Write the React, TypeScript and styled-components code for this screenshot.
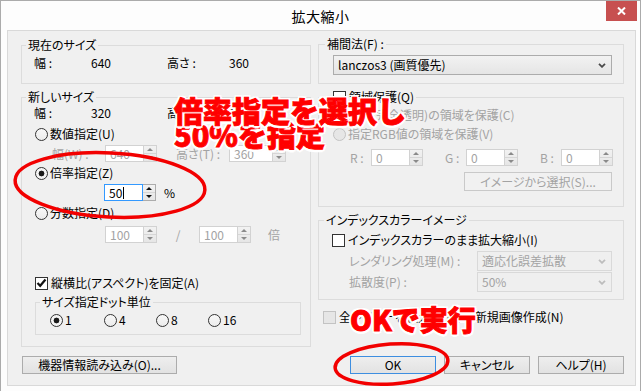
import * as React from 'react'
import styled, { createGlobalStyle } from 'styled-components'

const GlobalStyle = createGlobalStyle`
  html, body {
    margin: 0;
    padding: 0;
    background: #ffffff;
  }
  body {
    font-family: "Noto Sans CJK JP", "Noto Sans", sans-serif;
    font-size: 12px;
    line-height: 16px;
    color: #000;
    font-feature-settings: "palt";
  }
`

const DIM = '#a3a3a3'

const Stage = styled.div`
  position: relative;
  width: 643px;
  height: 391px;
  overflow: hidden;
  background: #ffffff;
`

const Frame = styled.div`
  width: 641px;
  height: 393px;
  box-sizing: border-box;
  border: 1px solid #ababab;
  background: #fdfdfd;
`

const TitleBar = styled.div`
  height: 29px;
  display: grid;
  grid-template-columns: 1fr auto 1fr;
  align-items: start;
`

const Title = styled.div`
  grid-column: 2;
  font-size: 14px;
  line-height: 30px;
  letter-spacing: 0.5px;
`

const CloseButton = styled.div`
  grid-column: 3;
  justify-self: end;
  width: 31px;
  height: 20px;
  margin-right: 3px;
  background: #c75050;
  display: flex;
  align-items: center;
  justify-content: center;
`

const Panel = styled.div`
  margin-left: 6px;
  width: 629px;
  height: 356px;
  box-sizing: border-box;
  border: 1px solid #d9d9d9;
  background: #f0f0f0;
  padding: 0 11px 0 13px;
  display: flex;
  gap: 7px;
`

const Column = styled.div<{ $w: number }>`
  width: ${p => p.$w}px;
  display: flex;
  flex-direction: column;
  align-items: stretch;
`

const Group = styled.fieldset<{ $mt: number; $ml?: number; $w?: number }>`
  margin: ${p => p.$mt}px 0 0 ${p => p.$ml ?? 0}px;
  padding: 0;
  border: 1px solid #dcdcdc;
  min-width: 0;
  ${p => (p.$w ? `width: ${p.$w}px; box-sizing: border-box;` : '')}
`

const Legend = styled.legend<{ $ml: number }>`
  margin-left: ${p => p.$ml}px;
  padding: 0 2px;
  line-height: 16px;
  display: flex;
  align-items: center;
  gap: 3px;
`

const GroupBody = styled.div<{ $pad: string }>`
  padding: ${p => p.$pad};
  display: flex;
  flex-direction: column;
  align-items: flex-start;
`

const Row = styled.div<{ $mt?: number; $ml?: number; $h?: number; $fill?: boolean }>`
  display: flex;
  align-items: center;
  margin-top: ${p => p.$mt ?? 0}px;
  margin-left: ${p => p.$ml ?? 0}px;
  height: ${p => p.$h ?? 16}px;
  white-space: nowrap;
  ${p => (p.$fill ? 'align-self: stretch;' : '')}
`

const InfoGrid = styled.div`
  display: grid;
  grid-template-columns: 57px 76px 62px auto;
  height: 16px;
  white-space: nowrap;
`

const Text = styled.span<{ $w?: number; $dim?: boolean; $ml?: number; $center?: boolean }>`
  display: inline-block;
  ${p => (p.$w ? `width: ${p.$w}px;` : '')}
  margin-left: ${p => p.$ml ?? 0}px;
  color: ${p => (p.$dim ? DIM : '#000')};
  text-align: ${p => (p.$center ? 'center' : 'left')};
  white-space: nowrap;
`

const Choice = styled.div<{ $w?: number }>`
  display: flex;
  align-items: center;
  gap: 2px;
  ${p => (p.$w ? `width: ${p.$w}px;` : '')}
`

const RadioMark = styled.span<{ $checked?: boolean; $dim?: boolean }>`
  width: 13px;
  height: 13px;
  box-sizing: border-box;
  border-radius: 50%;
  flex: none;
  border: 1px solid ${p => (p.$dim ? '#c3c3c3' : '#333333')};
  background: ${p =>
    p.$checked
      ? 'radial-gradient(circle, #1a1a1a 0 2.6px, #f4f4f4 3.2px)'
      : p.$dim
        ? '#e6e6e6'
        : 'linear-gradient(#f8f8f8, #ececec)'};
`

const CheckMark = styled.span<{ $dim?: boolean }>`
  width: 13px;
  height: 13px;
  box-sizing: border-box;
  flex: none;
  border: 1px solid ${p => (p.$dim ? '#c3c3c3' : '#333333')};
  background: ${p => (p.$dim ? '#e6e6e6' : '#ffffff')};
  display: flex;
  align-items: center;
  justify-content: center;
`

const SpinWrap = styled.div<{ $w: number; $ml?: number }>`
  display: flex;
  width: ${p => p.$w}px;
  height: 17px;
  margin-left: ${p => p.$ml ?? 0}px;
  flex: none;
`

const SpinField = styled.div<{ $focus?: boolean; $dim?: boolean }>`
  flex: 1;
  box-sizing: border-box;
  border: 1px solid ${p => (p.$focus ? '#3399ff' : p.$dim ? '#d2d2d2' : '#abadb3')};
  background: #ffffff;
  color: ${p => (p.$dim ? DIM : '#000')};
  padding-left: 4px;
  line-height: 15px;
  display: flex;
  align-items: center;
`

const Caret = styled.span`
  width: 1px;
  height: 12px;
  background: #000;
  margin-left: 1px;
`

const SpinButtons = styled.div<{ $dim?: boolean }>`
  width: 13px;
  box-sizing: border-box;
  border: 1px solid ${p => (p.$dim ? '#d2d2d2' : '#acacac')};
  border-left: none;
  background: linear-gradient(#f2f2f2, #e6e6e6);
  display: flex;
  flex-direction: column;
`

const SpinHalf = styled.div`
  flex: 1;
  display: flex;
  align-items: center;
  justify-content: center;
  & + & {
    border-top: 1px solid #d6d6d6;
  }
`

const Arrow = styled.span<{ $down?: boolean; $dim?: boolean }>`
  width: 0;
  height: 0;
  border-left: 3px solid transparent;
  border-right: 3px solid transparent;
  ${p => (p.$down ? 'border-top' : 'border-bottom')}: 3px solid ${p => (p.$dim ? '#8a8a8a' : '#111')};
`

const SelectBox = styled.div<{ $dim?: boolean }>`
  flex: 1;
  align-self: stretch;
  height: 20px;
  box-sizing: border-box;
  display: flex;
  align-items: center;
  justify-content: space-between;
  padding: 0 5px 0 4px;
  border: 1px solid ${p => (p.$dim ? '#d9d9d9' : '#acacac')};
  background: ${p => (p.$dim ? '#efefef' : 'linear-gradient(#f2f2f2, #e5e5e5)')};
  color: ${p => (p.$dim ? DIM : '#000')};
  white-space: nowrap;
`

const Button = styled.div<{ $w: number; $h?: number; $primary?: boolean; $dim?: boolean; $mt?: number; $ml?: number; $end?: boolean }>`
  width: ${p => p.$w}px;
  height: ${p => p.$h ?? 18}px;
  margin-top: ${p => p.$mt ?? 0}px;
  margin-left: ${p => p.$ml ?? 0}px;
  box-sizing: border-box;
  border: 1px solid ${p => (p.$primary ? '#3d8ee0' : p.$dim ? '#c9c9c9' : '#acacac')};
  background: ${p => (p.$dim ? '#f1f1f1' : 'linear-gradient(#eeeeee, #e2e2e2)')};
  color: ${p => (p.$dim ? DIM : '#000')};
  display: flex;
  align-items: center;
  justify-content: center;
  white-space: nowrap;
  flex: none;
  ${p => (p.$end ? 'align-self: flex-end;' : '')}
`

const ButtonBar = styled.div`
  display: flex;
  justify-content: flex-end;
  gap: 8px;
  margin-top: 31px;
`

const Overlay = styled.div`
  position: absolute;
  inset: 0;
  pointer-events: none;
`

const Marks = styled.svg`
  position: absolute;
  left: 0;
  top: 0;
`

const Callout = styled.div<{ $x: number; $y: number; $size: number }>`
  position: absolute;
  left: ${p => p.$x}px;
  top: ${p => p.$y}px;
  font-size: ${p => p.$size}px;
  line-height: 28px;
  font-weight: 900;
  font-feature-settings: normal;
  color: #ff0000;
  -webkit-text-stroke: 0.9px #ff0000;
  white-space: nowrap;
  text-shadow:
    2.5px 0 #fff, -2.5px 0 #fff, 0 2.5px #fff, 0 -2.5px #fff,
    1.8px 1.8px #fff, -1.8px 1.8px #fff, 1.8px -1.8px #fff, -1.8px -1.8px #fff,
    0 0 3px rgba(0, 0, 0, 0.25);
`

const Radio = ({ label, checked, dim, w }: { label: string; checked?: boolean; dim?: boolean; w?: number }) => (
  <Choice $w={w}>
    <RadioMark $checked={checked} $dim={dim} />
    <Text $dim={dim}>{label}</Text>
  </Choice>
)

const Tick = () => (
  <svg width="11" height="10" viewBox="0 0 11 10">
    <path d="M1.5 5 L4.2 7.8 L9.5 1.5" fill="none" stroke="#111" strokeWidth="2.2" />
  </svg>
)

const Check = ({ label, checked, dim, textDim }: { label: string; checked?: boolean; dim?: boolean; textDim?: boolean }) => (
  <Choice>
    <CheckMark $dim={dim}>{checked && <Tick />}</CheckMark>
    <Text $dim={textDim} $ml={1}>{label}</Text>
  </Choice>
)

const Spin = ({ value, w, ml, dim, focus }: { value: string; w: number; ml?: number; dim?: boolean; focus?: boolean }) => (
  <SpinWrap $w={w} $ml={ml}>
    <SpinField $dim={dim} $focus={focus}>
      {value}
      {focus && <Caret />}
    </SpinField>
    <SpinButtons $dim={dim}>
      <SpinHalf><Arrow $dim={dim} /></SpinHalf>
      <SpinHalf><Arrow $down $dim={dim} /></SpinHalf>
    </SpinButtons>
  </SpinWrap>
)

const Chevron = ({ dim }: { dim?: boolean }) => (
  <svg width="8" height="5" viewBox="0 0 8 5">
    <path d="M1 0.8 L4 3.8 L7 0.8" fill="none" stroke={dim ? '#bdbdbd' : '#4a4a4a'} strokeWidth="1.8" />
  </svg>
)

const Select = ({ value, dim }: { value: string; dim?: boolean }) => (
  <SelectBox $dim={dim}>
    <span>{value}</span>
    <Chevron dim={dim} />
  </SelectBox>
)

export default function App() {
  return (
    <Stage>
      <GlobalStyle />
      <Frame>
        <TitleBar>
          <Title>拡大縮小</Title>
          <CloseButton>
            <svg width="9" height="8" viewBox="0 0 9 8">
              <path d="M1 0.5 L8 7.5 M8 0.5 L1 7.5" stroke="#fff" strokeWidth="2" />
            </svg>
          </CloseButton>
        </TitleBar>

        <Panel>
          <Column $w={290}>
            <Group $mt={6}>
              <Legend $ml={4}>現在のサイズ</Legend>
              <GroupBody $pad="2px 0 12px 12px">
                <InfoGrid>
                  <span>幅 :</span>
                  <span>640</span>
                  <span>高さ :</span>
                  <span>360</span>
                </InfoGrid>
              </GroupBody>
            </Group>

            <Group $mt={5}>
              <Legend $ml={4}>新しいサイズ</Legend>
              <GroupBody $pad="0 0 11px 12px">
                <InfoGrid>
                  <span>幅 :</span>
                  <span>320</span>
                  <span>高さ :</span>
                  <span>160</span>
                </InfoGrid>

                <Row $mt={5} $ml={1}>
                  <Radio label="数値指定(U)" />
                </Row>
                <Row $mt={3} $ml={18} $h={17}>
                  <Text $w={53} $dim>幅(W) :</Text>
                  <Spin value="640" w={52} dim />
                  <Text $w={53} $ml={19} $dim>高さ(T) :</Text>
                  <Spin value="360" w={57} dim />
                </Row>

                <Row $mt={3} $ml={1}>
                  <Radio label="倍率指定(Z)" checked />
                </Row>
                <Row $mt={3} $ml={70} $h={17}>
                  <Spin value="50" w={52} focus />
                  <Text $ml={8}>%</Text>
                </Row>

                <Row $mt={4} $ml={1}>
                  <Radio label="分数指定(D)" />
                </Row>
                <Row $mt={5} $ml={71} $h={17}>
                  <Spin value="100" w={52} dim />
                  <Text $w={42} $center $dim>/</Text>
                  <Spin value="100" w={52} dim />
                  <Text $ml={17} $dim>倍</Text>
                </Row>

                <Row $mt={32} $ml={1}>
                  <Check label="縦横比(アスペクト)を固定(A)" checked />
                </Row>

                <Group $mt={3} $ml={1} $w={266}>
                  <Legend $ml={4}>サイズ指定ドット単位</Legend>
                  <GroupBody $pad="2px 0 6px 14px">
                    <Row>
                      <Radio label="1" checked w={54} />
                      <Radio label="4" w={52} />
                      <Radio label="8" w={52} />
                      <Radio label="16" w={52} />
                    </Row>
                  </GroupBody>
                </Group>
              </GroupBody>
            </Group>

            <Button $w={155} $mt={9} $ml={1}>機器情報読み込み(O)...</Button>
          </Column>

          <Column $w={306}>
            <Group $mt={5}>
              <Legend $ml={6}>補間法(F) :</Legend>
              <GroupBody $pad="3px 11px 8px 14px">
                <Row $h={20} $fill>
                  <Select value="lanczos3 (画質優先)" />
                </Row>
              </GroupBody>
            </Group>

            <Group $mt={5}>
              <Legend $ml={12}>
                <CheckMark />
                <span>領域保護(Q)</span>
              </Legend>
              <GroupBody $pad="2px 11px 15px 14px">
                <Row>
                  <Radio label="透明(完全透明)の領域を保護(C)" dim />
                </Row>
                <Row $mt={3}>
                  <Radio label="指定RGB値の領域を保護(V)" dim />
                </Row>
                <Row $mt={7} $ml={17} $h={17}>
                  <Text $w={21} $dim>R :</Text>
                  <Spin value="0" w={52} dim />
                  <Text $w={21} $ml={22} $dim>G :</Text>
                  <Spin value="0" w={52} dim />
                  <Text $w={21} $ml={22} $dim>B :</Text>
                  <Spin value="0" w={52} dim />
                </Row>
                <Button $w={148} $h={19} $mt={6} $dim $end>
                  イメージから選択(S)...
                </Button>
              </GroupBody>
            </Group>

            <Group $mt={5}>
              <Legend $ml={5}>インデックスカラーイメージ</Legend>
              <GroupBody $pad="4px 11px 7px 13px">
                <Row>
                  <Check label="インデックスカラーのまま拡大縮小(I)" />
                </Row>
                <Row $mt={3} $ml={17} $h={20} $fill>
                  <Text $w={128} $dim>レンダリング処理(M) :</Text>
                  <Select value="適応化誤差拡散" dim />
                </Row>
                <Row $mt={1} $ml={17} $h={20} $fill>
                  <Text $w={128} $dim>拡散度(P) :</Text>
                  <Select value="50%" dim />
                </Row>
              </GroupBody>
            </Group>

            <Row $mt={9} $ml={5}>
              <Check label="全レイヤーを拡大縮小して新規画像作成(N)" dim />
            </Row>

            <ButtonBar>
              <Button $w={86} $primary>OK</Button>
              <Button $w={86}>キャンセル</Button>
              <Button $w={86}>ヘルプ(H)</Button>
            </ButtonBar>
          </Column>
        </Panel>
      </Frame>

      <Overlay>
        <Marks width="643" height="391" viewBox="0 0 643 391">
          <ellipse cx="110" cy="185" rx="95" ry="32" transform="rotate(3 110 185)" fill="none" stroke="#f20000" strokeWidth="3.5" />
          <ellipse cx="391.5" cy="364" rx="56.5" ry="20" transform="rotate(-4 391.5 364)" fill="none" stroke="#f20000" strokeWidth="3.5" />
        </Marks>
        <Callout $x={174} $y={120} $size={29}>50%を指定</Callout>
        <Callout $x={174} $y={96} $size={29}>倍率指定を選択し</Callout>
        <Callout $x={350} $y={305} $size={28}>OKで実行</Callout>
      </Overlay>
    </Stage>
  )
}
